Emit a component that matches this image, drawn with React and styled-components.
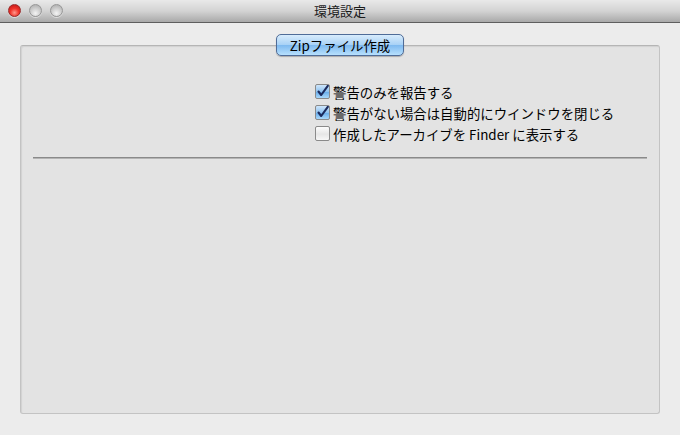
import React from 'react';
import styled, { createGlobalStyle } from 'styled-components';

const GlobalStyle = createGlobalStyle`
    html, body {
        margin: 0;
        padding: 0;
        background: #ececec;
    }
    body {
        font-family: "Lucida Grande", "Noto Sans CJK JP", "DejaVu Sans", sans-serif;
    }
`;

const options = [
    { label: '警告のみを報告する', checked: true },
    { label: '警告がない場合は自動的にウインドウを閉じる', checked: true },
    { label: '作成したアーカイブを Finder に表示する', checked: false },
];

function CheckIcon() {
    return (
        <svg width="13" height="13" viewBox="0 0 13 13">
            <path d="M2.5 6.5 L5.2 10 L11.8 0.8" fill="none" stroke="#1b2a5c" strokeWidth="2.1" strokeLinecap="round" strokeLinejoin="round" />
        </svg>
    );
}

function App() {
    return (
        <Window>
            <GlobalStyle />
            <TitleBar>
                <Lights>
                    <Light $color="red" />
                    <Light />
                    <Light />
                </Lights>
                <Title>環境設定</Title>
            </TitleBar>
            <Content>
                <TabRow>
                    <Tab>Zipファイル作成</Tab>
                </TabRow>
                <Panel>
                    <Options>
                        {options.map((o) => (
                            <Option key={o.label}>
                                <Box $checked={o.checked}>{o.checked && <CheckIcon />}</Box>
                                <Label>{o.label}</Label>
                            </Option>
                        ))}
                    </Options>
                    <Separator />
                </Panel>
            </Content>
        </Window>
    );
}

const Window = styled.div`
    width: 680px;
    height: 435px;
    background: #ececec;
    display: flex;
    flex-direction: column;
    overflow: hidden;
`;
const TitleBar = styled.div`
    position: relative;
    height: 22px;
    flex: none;
    background: linear-gradient(#e9e9e9, #d3d3d3 50%, #a9a9a9);
    border-bottom: 1px solid #5e5e5e;
    display: flex;
    align-items: center;
    justify-content: center;
`;
const Lights = styled.div`
    position: absolute;
    left: 8px;
    top: 4px;
    display: flex;
    gap: 8px;
`;
const Light = styled.div`
    width: 13px;
    height: 13px;
    border-radius: 50%;
    box-sizing: border-box;
    border: 1px solid ${(p) => (p.$color === 'red' ? '#9a2a2a' : '#979797')};
    background: ${(p) =>
        p.$color === 'red'
            ? 'radial-gradient(circle at 50% 70%, #ff9a8e 0%, #f0332a 45%, #b81414 100%)'
            : 'radial-gradient(circle at 50% 75%, #f4f4f4 0%, #c9c9c9 55%, #a6a6a6 100%)'};
    box-shadow: 0 1px 0 rgba(255, 255, 255, 0.5);
`;
const Title = styled.div`
    font-size: 13px;
    color: #1a1a1a;
    line-height: 22px;
    margin-top: -1px;
`;
const Content = styled.div`
    flex: 1;
    padding: 11px 20px 21px 20px;
    display: flex;
    flex-direction: column;
`;
const TabRow = styled.div`
    display: flex;
    justify-content: center;
    position: relative;
    z-index: 1;
    margin-bottom: -11px;
`;
const Tab = styled.div`
    width: 128px;
    height: 22px;
    box-sizing: border-box;
    border: 1px solid #4f6c98;
    border-radius: 5px;
    background: linear-gradient(#d8ecfc, #a9d2f6 48%, #7fbaf0 52%, #b7e0fd);
    box-shadow: 0 1px 1px rgba(0, 0, 0, 0.25);
    font-size: 13.4px;
    line-height: 20px;
    text-align: center;
    color: #000;
`;
const Panel = styled.div`
    flex: 1;
    background: #e3e3e3;
    border: 1px solid #c3c3c3;
    border-top-color: #b5b5b5;
    border-radius: 3px;
    box-shadow: inset 1px 1px 1px rgba(0, 0, 0, 0.08);
    padding: 35px 12px 0 12px;
    display: flex;
    flex-direction: column;
`;
const Options = styled.div`
    display: flex;
    flex-direction: column;
    padding-left: 282px;
`;
const Option = styled.div`
    display: flex;
    align-items: center;
    gap: 3px;
    height: 21px;
`;
const Box = styled.div`
    width: 15px;
    height: 15px;
    box-sizing: border-box;
    border: 1px solid #8a8a8a;
    border-radius: 2px;
    background: ${(p) =>
        p.$checked
            ? 'linear-gradient(#cfe6fb, #8fc3f1 50%, #6aaeeb 55%, #a9d8fb)'
            : 'linear-gradient(#fdfdfd, #e6e6e6 55%, #f7f7f7)'};
    display: flex;
    align-items: center;
    justify-content: center;
    overflow: visible;
`;
const Label = styled.span`
    font-size: 13.4px;
    color: #000;
    white-space: nowrap;
`;
const Separator = styled.div`
    margin-top: 13px;
    height: 1px;
    background: #8a8a8a;
    border-bottom: 1px solid #b4b4b4;
`;

export default App;
